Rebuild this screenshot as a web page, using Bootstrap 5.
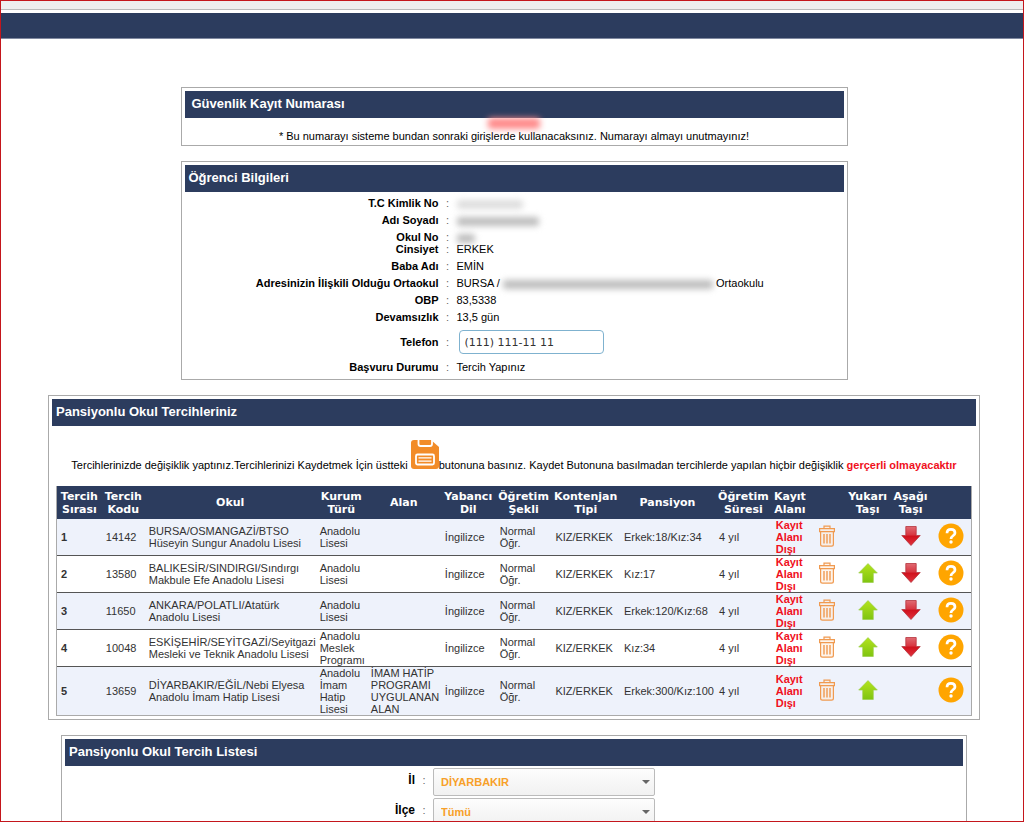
<!DOCTYPE html>
<html lang="tr">
<head>
<meta charset="utf-8">
<meta name="viewport" content="width=device-width, initial-scale=1">
<title>Pansiyonlu Okul Tercihleri</title>
<link href="https://cdn.jsdelivr.net/npm/bootstrap@5.3.0/dist/css/bootstrap.min.css" rel="stylesheet">
<style>
  :root { --navy: #2c3c5e; }
  body { font: 11px/12px "Liberation Sans", Arial, sans-serif; color: #000; background: #fff; }
  .page-frame { border: 1px solid #c4161c; height: 100vh; overflow: hidden; }
  .top-strip { height: 9px; background: #eee; border-bottom: 1px solid #bbb; margin-bottom: 3px; }
  .top-bar { height: 26px; background: var(--navy); border-bottom: 1px solid #8089a0; margin-bottom: 48px; }
  .panels { padding-left: 4px; gap: 15px; }
  .panel { border: 1px solid #aaa; padding: 3px; width: 100%; }
  .panel-narrow { max-width: 667px; }
  .panel-wide { max-width: 932px; }
  .panel-list { max-width: 906px; }
  .panel-title { background: var(--navy); color: #fff; font-size: 13px; line-height: 25px; font-weight: bold; margin: 0; padding: 0 4px 2px; }
  .panel-title.inset { padding-left: 7px; }
  .notice { position: relative; padding: 12px 0 0; text-align: center; }
  .smudge { display: inline-block; border-radius: 3px; background: #bdbdbd; filter: blur(3px); height: 9px; vertical-align: middle; }
  .smudge-red { position: absolute; top: 0; left: 46%; width: 52px; height: 11px; background: #ff8a8a; }
  .smudge-id { width: 66px; background: #ddd; }
  .smudge-name { width: 82px; }
  .smudge-no { width: 18px; }
  .smudge-school { width: 210px; }
  .info-row { padding-top: 5px; }
  .info-row.tight { padding-top: 0; }
  .info-row.roomy { padding-top: 7px; }
  .info-row .lbl { width: 254px; text-align: right; font-weight: bold; }
  .info-row .sep, .pick-row .sep { width: 18px; text-align: center; color: #666; }
  .info-body { padding-bottom: 3px; }
  .phone { width: 145px; height: 24px; margin-left: 2px; border: 1px solid #7fb2cf; border-radius: 4px; padding: 0 5px; font: 11px "DejaVu Sans", Verdana, sans-serif; color: #333; }
  .save-note { padding: 14px 0 15px; text-align: center; }
  .save-note strong, .outside { color: #f0101c !important; font-weight: bold; }
  .icon-btn { border: 0; background: none; padding: 0; line-height: 0; }
  .icon-btn svg { vertical-align: baseline; }
  .prefs { width: 100%; table-layout: fixed; border: 1px solid #aaa; border-top: 0; border-collapse: separate; border-spacing: 0; color: #333; }
  .prefs-box { padding: 0 4px; }
  .prefs th { background: var(--navy); color: #fff; font: bold 11px/13px "DejaVu Sans", Verdana, sans-serif; text-align: center; height: 33px; padding: 0; }
  .prefs td { padding: 0 0 0 4px; vertical-align: middle; border-bottom: 1px solid #555; height: 37px; }
  .prefs tbody tr:last-child td { border-bottom: 0; }
  .prefs tbody tr:nth-child(odd) td { background: #eef2fb; }
  .prefs td.act { padding: 0; text-align: center; }
  .pick-body { padding-top: 2px; }
  .pick-row .lbl { width: 350px; padding-top: 6px; text-align: right; font-weight: bold; font-size: 12px; }
  .pick-row .sep { padding-top: 6px; }
  .pick { appearance: none; width: 222px; height: 28px; margin-bottom: 2px; border: 1px solid #bbb; border-radius: 2px; padding: 0 7px; font: bold 11px "Liberation Sans", Arial, sans-serif; color: #f7a029; background: linear-gradient(#fdfdfd, #f1f1f1); }
  .pick-wrap { position: relative; }
  .pick-wrap::after { content: ""; position: absolute; right: 5px; top: 12px; border: 4px solid transparent; border-top: 4px solid #666; border-bottom: 0; pointer-events: none; }
</style>
</head>
<body>
<svg class="position-absolute" width="0" height="0" aria-hidden="true">
  <defs>
    <linearGradient id="gGreen" x1="0" y1="0" x2="0" y2="1"><stop offset="0" stop-color="#b4e31d"/><stop offset="1" stop-color="#7fc410"/></linearGradient>
    <linearGradient id="gRed" x1="0" y1="0" x2="0" y2="1"><stop offset="0" stop-color="#e06a72"/><stop offset=".45" stop-color="#d83540"/><stop offset=".5" stop-color="#d0111d"/><stop offset="1" stop-color="#e0323c"/></linearGradient>
    <symbol id="trash" viewBox="0 0 18 22"><g fill="none" stroke="#f09a50" stroke-width="1.2"><path d="M1.6 3.6h14.8v3H1.6zM6 3.4V1.2h6v2.200M2.600 6.800v12.400q0 1.900 1.900 1.900h9q1.900 0 1.900-1.900V6.800" fill="#fdebdc" fill-opacity=".5"/><path d="M6 9v9.500M9 9v9.500M12 9v9.500" stroke-width="1.400"/></g></symbol>
    <symbol id="up" viewBox="0 0 20 20"><path d="M10 .6 19.300 10H15.300v9.500H4.700V10H.7z" fill="url(#gGreen)" stroke="#9ccf4a" stroke-width=".7"/></symbol>
    <symbol id="down" viewBox="0 0 20 20"><path d="M4.800.5h10.400v9h4L10 19.500.8 9.500h4z" fill="url(#gRed)" stroke="#b5343c" stroke-width=".8"/></symbol>
    <symbol id="help" viewBox="0 0 26 26"><circle cx="13" cy="13" r="12.500" fill="#ffa500"/><path d="M9 10.200C9 7.700 10.700 6.400 13 6.400s4 1.400 4 3.500c0 2.800-4 3-4 6" fill="none" stroke="#fff" stroke-width="2.700"/><circle cx="13" cy="19" r="1.700" fill="#fff"/></symbol>
  </defs>
</svg>
<div class="page-frame">
  <header><div class="top-strip"></div><div class="top-bar"></div></header>
  <main class="panels d-flex flex-column align-items-center">
    <section class="panel panel-narrow">
      <h2 class="panel-title inset">Güvenlik Kayıt Numarası</h2>
      <div class="notice"><span class="smudge smudge-red"></span>* Bu numarayı sisteme bundan sonraki girişlerde kullanacaksınız. Numarayı almayı unutmayınız!</div>
    </section>

    <section class="panel panel-narrow">
      <h2 class="panel-title">Öğrenci Bilgileri</h2>
      <div class="info-body">
        <div class="info-row d-flex"><div class="lbl">T.C Kimlik No</div><div class="sep">:</div><div><span class="smudge smudge-id"></span></div></div>
        <div class="info-row d-flex"><div class="lbl">Adı Soyadı</div><div class="sep">:</div><div><span class="smudge smudge-name"></span></div></div>
        <div class="info-row d-flex"><div class="lbl">Okul No</div><div class="sep">:</div><div><span class="smudge smudge-no"></span></div></div>
        <div class="info-row tight d-flex"><div class="lbl">Cinsiyet</div><div class="sep">:</div><div>ERKEK</div></div>
        <div class="info-row d-flex"><div class="lbl">Baba Adı</div><div class="sep">:</div><div>EMİN</div></div>
        <div class="info-row d-flex"><div class="lbl">Adresinizin İlişkili Olduğu Ortaokul</div><div class="sep">:</div><div>BURSA / <span class="smudge smudge-school"></span> Ortaokulu</div></div>
        <div class="info-row d-flex"><div class="lbl">OBP</div><div class="sep">:</div><div>83,5338</div></div>
        <div class="info-row d-flex"><div class="lbl">Devamsızlık</div><div class="sep">:</div><div>13,5 gün</div></div>
        <div class="info-row roomy d-flex align-items-center"><label class="lbl" for="telefon">Telefon</label><div class="sep">:</div><input class="phone" id="telefon" type="text" value="(111) 111-11 11"></div>
        <div class="info-row roomy d-flex"><div class="lbl">Başvuru Durumu</div><div class="sep">:</div><div>Tercih Yapınız</div></div>
      </div>
    </section>

    <section class="panel panel-wide">
      <h2 class="panel-title">Pansiyonlu Okul Tercihleriniz</h2>
      <div class="save-note">Tercihlerinizde değişiklik yaptınız.Tercihlerinizi Kaydetmek İçin üstteki <button class="icon-btn align-baseline" type="button" aria-label="Kaydet"><svg width="28" height="29" viewBox="0 0 28 29"><path d="M3 0h17l8 7v19q0 3-3 3H3q-3 0-3-3V3q0-3 3-3z" fill="#f28c28"/><path d="M7.500 0v4q0 2 2 2h9.500q2 0 2-2V0" fill="#f28c28" stroke="#fff" stroke-width="1.800"/><rect x="5" y="14.500" width="18" height="10" rx="1.500" fill="#f28c28" stroke="#fff" stroke-width="1.800"/><path d="M7.500 17.800h13M7.500 21.200h13" stroke="#fff" stroke-width="1.300"/></svg></button>butonuna basınız. Kaydet Butonuna basılmadan tercihlerde yapılan hiçbir değişiklik <strong>gerçerli olmayacaktır</strong></div>
      <div class="prefs-box">
      <table class="prefs">
        <colgroup><col style="width:4.900%"><col style="width:4.700%"><col style="width:18.700%"><col style="width:5.600%"><col style="width:8.100%"><col style="width:6%"><col style="width:6.100%"><col style="width:7.500%"><col style="width:10.400%"><col style="width:6.200%"><col style="width:4%"><col style="width:4.100%"><col style="width:4.800%"><col style="width:4.600%"><col style="width:4.300%"></colgroup>
        <thead><tr><th>Tercih Sırası</th><th>Tercih Kodu</th><th>Okul</th><th>Kurum Türü</th><th>Alan</th><th>Yabancı Dil</th><th>Öğretim Şekli</th><th>Kontenjan Tipi</th><th>Pansiyon</th><th>Öğretim Süresi</th><th>Kayıt Alanı</th><th></th><th>Yukarı Taşı</th><th>Aşağı Taşı</th><th></th></tr></thead>
        <tbody id="rows"></tbody>
      </table>
      </div>
    </section>

    <section class="panel panel-list">
      <h2 class="panel-title">Pansiyonlu Okul Tercih Listesi</h2>
      <div class="pick-body">
        <div class="pick-row d-flex"><label class="lbl" for="il">İl</label><div class="sep">:</div><div class="pick-wrap"><select class="pick" id="il"><option>DİYARBAKIR</option></select></div></div>
        <div class="pick-row d-flex"><label class="lbl" for="ilce">İlçe</label><div class="sep">:</div><div class="pick-wrap"><select class="pick" id="ilce"><option>Tümü</option></select></div></div>
      </div>
    </section>
  </main>
</div>
<script src="https://cdn.jsdelivr.net/npm/bootstrap@5.3.0/dist/js/bootstrap.bundle.min.js"></script>
<script>
  const prefs = [
    ["14142", "BURSA/OSMANGAZİ/BTSO<br>Hüseyin Sungur Anadolu Lisesi", "Anadolu Lisesi", "", "Erkek:18/Kız:34"],
    ["13580", "BALIKESİR/SINDIRGI/Sındırgı<br>Makbule Efe Anadolu Lisesi", "Anadolu Lisesi", "", "Kız:17"],
    ["11650", "ANKARA/POLATLI/Atatürk<br>Anadolu Lisesi", "Anadolu Lisesi", "", "Erkek:120/Kız:68"],
    ["10048", "ESKİŞEHİR/SEYİTGAZİ/Seyitgazi<br>Mesleki ve Teknik Anadolu Lisesi", "Anadolu Meslek Programı", "", "Kız:34"],
    ["13659", "DİYARBAKIR/EĞİL/Nebi Elyesa<br>Anadolu İmam Hatip Lisesi", "Anadolu İmam Hatip Lisesi", "İMAM HATİP PROGRAMI UYGULANAN ALAN", "Erkek:300/Kız:100"]
  ];
  const icon = (id, w, h, label) => `<button class="icon-btn" type="button" aria-label="${label}"><svg width="${w}" height="${h}"><use href="#${id}"/></svg></button>`;
  document.getElementById("rows").innerHTML = prefs.map((p, i) => `<tr>
    <td><b>${i + 1}</b></td><td>${p[0]}</td><td class="text-nowrap">${p[1]}</td><td>${p[2]}</td><td>${p[3]}</td>
    <td>İngilizce</td><td>Normal Öğr.</td><td>KIZ/ERKEK</td><td class="text-nowrap">${p[4]}</td><td>4 yıl</td>
    <td class="outside">Kayıt Alanı Dışı</td>
    <td class="act">${icon("trash", 18, 22, "Sil")}</td>
    <td class="act">${i > 0 ? icon("up", 20, 20, "Yukarı taşı") : ""}</td>
    <td class="act">${i < prefs.length - 1 ? icon("down", 20, 20, "Aşağı taşı") : ""}</td>
    <td class="act">${icon("help", 26, 26, "Bilgi")}</td></tr>`).join("");
</script>
</body>
</html>
